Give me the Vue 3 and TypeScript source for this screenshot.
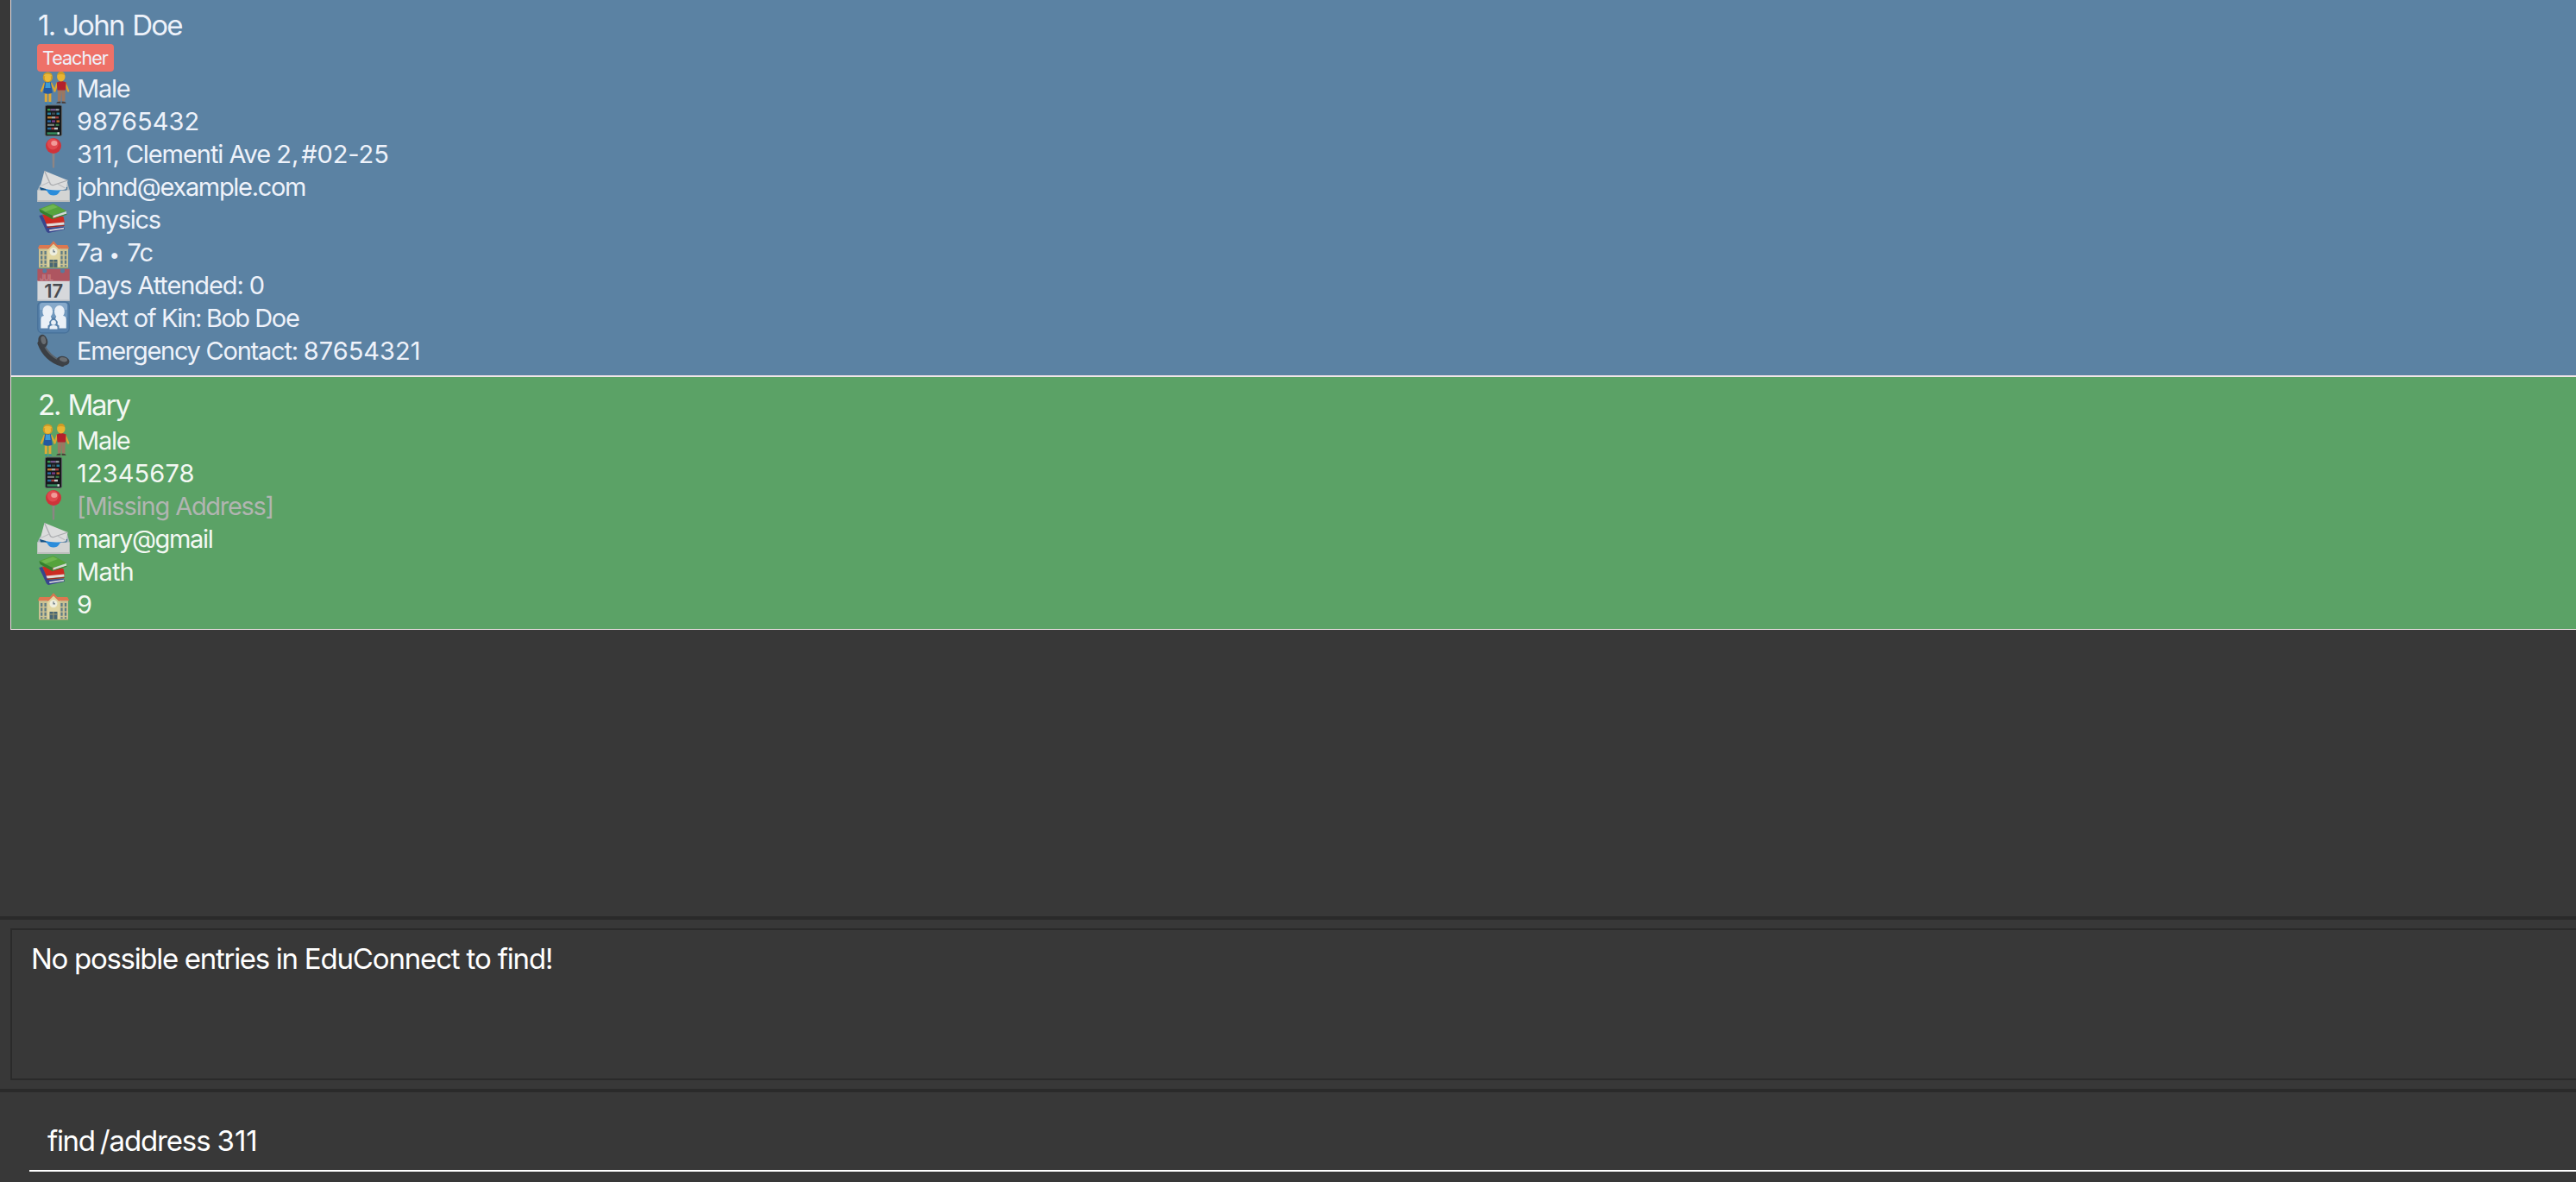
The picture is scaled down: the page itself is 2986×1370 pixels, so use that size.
<script setup lang="ts">
type Icon = 'couple' | 'phone' | 'pin' | 'mail' | 'books' | 'school' | 'calendar' | 'family' | 'call'
interface Part { text: string; spacing: number; small?: boolean }
interface Row { icon: Icon; parts: Part[]; missing?: boolean }
interface Person { title: string; spacing: number; theme: string; tags: string[]; rows: Row[] }

// A run of text with its own tracking, in pixels
const p = (text: string, spacing = -1.3, small = false): Part => ({ text, spacing, small })

const people: Person[] = [
  {
    title: '1. John Doe', spacing: -1.7, theme: 'blue', tags: ['Teacher'],
    rows: [
      { icon: 'couple', parts: [p('Male', -1.27)] },
      { icon: 'phone', parts: [p('98765432', 0.05)] },
      { icon: 'pin', parts: [p('311', 0), p(', ', -0.7), p('Clementi ', -1.05), p('Ave ', -1), p('2', 0), p(', ', -2.6), p('#02-25', -0.1)] },
      { icon: 'mail', parts: [p('johnd@example.com', -1.33)] },
      { icon: 'books', parts: [p('Physics', -1.29)] },
      { icon: 'school', parts: [p('7a ', -0.7), p('•', 1.4, true), p(' 7c', -0.9)] },
      { icon: 'calendar', parts: [p('Days ', -1.25), p('Attended: ', -1.1), p('0')] },
      { icon: 'family', parts: [p('Next '), p('of '), p('Kin: ', -1.75), p('Bob ', -1.5), p('Doe')] },
      { icon: 'call', parts: [p('Emergency '), p('Contact: ', -1.2), p('87654321', 0)] },
    ],
  },
  {
    title: '2. Mary', spacing: -2.1, theme: 'green', tags: [],
    rows: [
      { icon: 'couple', parts: [p('Male', -1.27)] },
      { icon: 'phone', parts: [p('12345678', 0.12)] },
      { icon: 'pin', parts: [p('[Missing ', -1.15), p('Address]')], missing: true },
      { icon: 'mail', parts: [p('mary@gmail', -1.35)] },
      { icon: 'books', parts: [p('Math', -0.8)] },
      { icon: 'school', parts: [p('9', 0)] },
    ],
  },
]

const message: Part[] = [p('No possible entries in '), p('EduConnect to find!', -1.16)]
const command: Part[] = [p('find', -1.3), p(' ', -3.2), p('/address ', -1.15), p('311', 0)]
</script>

<template>
  <main class="window">
    <section class="list">
      <article v-for="person in people" :key="person.title" class="card" :class="person.theme">
        <h2 class="name" :style="{ letterSpacing: person.spacing + 'px' }">{{ person.title }}</h2>
        <div v-if="person.tags.length" class="tags">
          <span v-for="tag in person.tags" :key="tag" class="tag">{{ tag }}</span>
        </div>
        <div v-for="row in person.rows" :key="row.icon" class="row">
          <svg class="icon" viewBox="0 0 38 38" aria-hidden="true">
            <g v-if="row.icon === 'couple'">
              <path d="M8.500 14 5 22.500M16.500 14l4 8" stroke="#d9a633" stroke-width="2.200" stroke-linecap="round" />
              <path d="M10.300 24v11M14.900 24v11" stroke="#dfa936" stroke-width="3" />
              <path d="M9 36.600h3M13.500 36.600h3.500" stroke="#3386b0" stroke-width="1.200" />
              <path d="M9 12.500q3.500-2 7 0l1.800 12q-5.300 2.500-10.600 0z" fill="#2358a0" />
              <path d="M10 12q2.500 2 5 0l.6 7h-6.200z" fill="#3b9bd6" />
              <ellipse cx="12.400" cy="6.600" rx="5.700" ry="6" fill="#cf9a27" />
              <ellipse cx="12.400" cy="7.600" rx="3.600" ry="3.900" fill="#edb939" />
              <path d="M8.500 5q3-2.500 8 0" stroke="#e8b93c" stroke-width="2" fill="none" />
              <path d="M23.500 13.500l-3.200 9M32.500 13.500l3.700 9" stroke="#d9a633" stroke-width="2.300" stroke-linecap="round" />
              <path d="M23.800 20h8.900l-.3 14.500h-3.500l-.7-11-.8 11h-3.500z" fill="#9a7863" />
              <path d="M22.800 12.500q5.400-3 10.800 0l-.6 9h-9.500z" fill="#b3202c" />
              <path d="M22.300 36.800q.3-2.500 5-2v2zM28.600 36.800v-2q4.700-.5 5 2z" fill="#4a3c38" />
              <ellipse cx="27.800" cy="5.900" rx="4.700" ry="5.600" fill="#e9b431" />
              <path d="M23.400 4q.5-4 4.400-4t4.400 4q-4.400-2-8.800 0" fill="#cf9a25" />
            </g>
            <g v-else-if="row.icon === 'phone'">
              <rect x="9.400" y="1" width="19.200" height="35.500" rx="1.800" fill="#17191b" stroke="#62666a" stroke-width="1" />
              <path d="M12 6.200h3.500" stroke="#3a9a50" stroke-width="2.400" />
              <path d="M15.500 6.200h6" stroke="#73578b" stroke-width="2.400" />
              <path d="M21.500 6.200h4" stroke="#89939a" stroke-width="2.400" />
              <path d="M12 10.700h4M22.500 10.700h3.500" stroke="#247b9c" stroke-width="2.400" />
              <path d="M17 10.700h4" stroke="#3d4a50" stroke-width="2.400" />
              <path d="M12 15.200h5" stroke="#b87a35" stroke-width="2.400" />
              <path d="M17 15.200h4" stroke="#9da4a5" stroke-width="2.400" />
              <path d="M21 15.200h4" stroke="#a23c3c" stroke-width="2.400" />
              <path d="M12 19.600h4" stroke="#296aa6" stroke-width="2.400" />
              <path d="M17 19.600h4" stroke="#793a84" stroke-width="2.400" />
              <path d="M22.500 19.600h3.500" stroke="#bf692b" stroke-width="2.400" />
              <path d="M12 23.800h8" stroke="#7b817a" stroke-width="2.200" />
              <path d="M21.500 23.800h4" stroke="#3b7d49" stroke-width="2.200" />
              <path d="M12 28h4.500" stroke="#266c9e" stroke-width="2.400" />
              <path d="M16.500 28h3.500" stroke="#a63e38" stroke-width="2.400" />
              <path d="M20 28h4" stroke="#c5cbcb" stroke-width="2.400" />
              <path d="M11.500 33.600h14" stroke="#34885c" stroke-width="2.600" />
              <path d="M23.500 33.600h2.500" stroke="#d0d8d8" stroke-width="2.600" />
            </g>
            <g v-else-if="row.icon === 'pin'">
              <path d="M17.500 17h3l-.4 18.500h-2.200z" fill="#8d8584" />
              <circle cx="19" cy="10" r="9" fill="#cf333a" />
              <circle cx="18.200" cy="8" r="6.500" fill="#e04a50" />
              <ellipse cx="19.800" cy="7" rx="3.600" ry="3" fill="#f29a98" />
            </g>
            <g v-else-if="row.icon === 'mail'">
              <path d="M3.500 17 .4 23.500V37h37.200V23.500L35 14z" fill="#aeb9c0" />
              <path d="M3 20h32l-1.500 6H5z" fill="#165385" />
              <path d="M10 22h18q-1 8.500-9 8.500T10 22" fill="#2b8ddb" />
              <path d="M8.500 1 35.500 12 33.500 22.500Q19 25.500 3.500 20z" fill="#dcdddd" />
              <path d="M8.500 1 15.500 16.500Q18 18.500 20.500 17L35.500 12" fill="none" stroke="#a9abae" stroke-width="1.300" />
              <path d="M4.500 18.500l10.500-5M32.500 21l-9-5" fill="none" stroke="#bcbec1" stroke-width="1.100" />
              <path d="M.4 23.500h9q2 0 3.500 3t6.100 3 6.100-3 3.500-3h9V37H.4z" fill="#d3d4d3" />
              <path d="M.4 36h37.200" stroke="#b9b9b7" stroke-width="1.600" />
            </g>
            <g v-else-if="row.icon === 'books'">
              <path d="M2.300 15 6 14l8 15 17-1.500.8 3.500L13 35 11 33.500z" fill="#38458d" />
              <path d="M14 31.200 31 28.800v1.800L14.500 33z" fill="#d2d3da" />
              <path d="M6 13.500 30.500 16l1.500 7.500-20.500 3z" fill="#cc2b22" />
              <path d="M10.500 24.500 31.300 22.500v3L11.800 27.500z" fill="#e3dad7" />
              <path d="M11.500 28.400 31.600 26.300" stroke="#a32420" stroke-width="1.300" />
              <path d="M2.300 7.200 18.700 1 34.300 9.500 18 15z" fill="#55a33c" />
              <path d="M5 7.200 18.500 2.200 24 5 9.500 10.500z" fill="#6fb650" />
              <path d="M2.300 7.200 18 15v4.200L3.600 11z" fill="#35802d" />
              <path d="M18.500 15.300 34 10v2.800L18.500 17.900z" fill="#d3dad1" />
              <path d="M18 18.500 34.300 13.200" stroke="#3a842f" stroke-width="1.200" />
            </g>
            <g v-else-if="row.icon === 'school'">
              <path d="M2 14h34v24H2z" fill="#c9c193" />
              <path d="M.7 15.200 2.800 11h32.400l2.100 4.200z" fill="#dc7850" />
              <path d="M5.200 18v18M9.600 18v18M28.500 18v18M33 18v18" stroke="#5d7a84" stroke-width="2.200" stroke-dasharray="4 1.400" />
              <path d="M12 14.500 19 8l7.500 6.500V38H12z" fill="#e0d6a2" />
              <path d="M11.500 14.800 19 6.300 26.800 14.800 25.500 16 19 9.800l-6.300 6.200z" fill="#d8754f" />
              <circle cx="19" cy="18.700" r="4.500" fill="#eeeede" />
              <path d="M19 16.300v2.600h2" stroke="#6d7a86" stroke-width="1.200" fill="none" />
              <path d="M14.500 28h9V38h-9z" fill="#486673" />
              <path d="M19 28v10M14.500 31h9" stroke="#a19d74" stroke-width="1" />
              <path d="M2 37.300h34" stroke="#8ea66b" stroke-width="1.200" />
            </g>
            <g v-else-if="row.icon === 'calendar'">
              <path d="M.4 14h37.300v23.700H.4z" fill="#d6d8db" />
              <path d="M.4.700h37.300V14.800H.4z" fill="#ae5560" />
              <circle cx="8.800" cy="3" r="2.500" fill="#587a9d" />
              <circle cx="29.500" cy="3" r="2.500" fill="#587a9d" />
              <text x="3" y="13.500" font-size="9" letter-spacing="-.5" fill="#c58088" class="glyph">JUL</text>
              <text x="19.200" y="34" font-size="22" text-anchor="middle" fill="#484b50" class="glyph">17</text>
              <path d="M.4 37h37.300" stroke="#b9bcc0" stroke-width="1" />
            </g>
            <g v-else-if="row.icon === 'family'">
              <rect x=".8" y=".8" width="36.400" height="36" rx="5" fill="#5681ab" stroke="#47719a" stroke-width="1.300" />
              <path d="M3 5q0-3 3-3h26q3 0 3 3v5H3z" fill="#86a9ca" />
              <path d="M3 10h32v9H3z" fill="#6f97bd" />
              <g fill="#eaf0f7">
                <ellipse cx="12.200" cy="12" rx="5.900" ry="7" />
                <ellipse cx="25.900" cy="12" rx="5.900" ry="7" />
                <path d="M4.300 31.500V21q0-3.500 3.500-4h7.700l1.500 3.500-2.800 3.500.3 3-2 1.500v3zM33.800 31.500V21q0-3.500-3.500-4h-7.700l-1.500 3.500 2.800 3.500-.3 3 2 1.500v3z" />
                <circle cx="19" cy="24.800" r="2.900" />
                <path d="M14.500 32.500v-2q0-2.500 4.500-2.500t4.500 2.500v2z" />
              </g>
            </g>
            <g v-else>
              <path d="M3.500 11C8 23 16 31 29 35" fill="none" stroke="#3b3f44" stroke-width="6" stroke-linecap="round" />
              <path d="M8.500 14C12.500 21 18 26.500 25 30" fill="none" stroke="#5d6369" stroke-width="1.800" />
              <ellipse cx="6.800" cy="8.300" rx="5.300" ry="7.600" transform="rotate(-14 6.800 8.300)" fill="#3d4146" />
              <ellipse cx="7.300" cy="7.300" rx="2.800" ry="4.800" transform="rotate(-14 7.300 7.300)" fill="#686d72" />
              <ellipse cx="30" cy="31.200" rx="7.500" ry="5.300" transform="rotate(12 30 31.200)" fill="#3d4146" />
              <ellipse cx="30.500" cy="29.800" rx="4.600" ry="2.500" transform="rotate(12 30.500 29.800)" fill="#686d72" />
            </g>
          </svg>
          <span class="value" :class="{ missing: row.missing }"><span
            v-for="(part, i) in row.parts" :key="i" :class="{ small: part.small }"
            :style="{ letterSpacing: part.spacing + 'px' }">{{ part.text }}</span></span>
        </div>
      </article>
    </section>
    <section class="result">
      <div class="message"><span
        v-for="(part, i) in message" :key="i" :style="{ letterSpacing: part.spacing + 'px' }">{{ part.text }}</span></div>
    </section>
    <section class="command">
      <div class="field"><span
        v-for="(part, i) in command" :key="i" :style="{ letterSpacing: part.spacing + 'px' }">{{ part.text }}</span></div>
    </section>
  </main>
</template>

<style>
html,
body {
  background: #383838;
  overflow: hidden;
}
</style>

<style scoped>
.window {
  display: flex;
  flex-direction: column;
  width: 100%;
  height: 1370px;
  background: #383838;
  font-family: Inter, "Liberation Sans", sans-serif;
  color: #fff;
}
.list {
  height: 1062px;
  flex: none;
  padding-left: 12px;
  overflow: hidden;
}
.card {
  box-sizing: border-box;
  border: 1px solid #f0e6e8;
  border-right: 0;
  padding: 11px 0 10px 30px;
  color: #eef2fa;
}
.card:first-child {
  border-top: 0;
  padding-top: 8px;
}
.blue {
  background: #5b82a3;
}
.green {
  background: #5ba266;
  color: #f3f8f3;
}
.name {
  margin: 0 0 1px 1px;
  font-size: 33px;
  line-height: 42px;
  font-weight: 400;
  word-spacing: 1.8px;
}
.tags {
  display: flex;
  height: 32px;
}
.tag {
  box-sizing: border-box;
  width: 89px;
  height: 32px;
  padding-left: 6px;
  border-radius: 4px;
  background: #ee7168;
  font-size: 21.5px;
  line-height: 32px;
  letter-spacing: -0.97px;
}
.row {
  display: flex;
  height: 38px;
}
.icon {
  width: 38px;
  height: 38px;
  flex: none;
}
.glyph {
  font-family: Inter, sans-serif;
  font-weight: 600;
}
.value {
  margin-left: 8px;
  font-size: 29px;
  line-height: 40px;
  white-space: pre;
}
.small {
  font-size: 22px;
  line-height: 1;
}
.missing {
  color: #b1b5b1;
}
.result {
  box-sizing: border-box;
  flex: none;
  height: 204px;
  border-top: 4px solid #2a2a2a;
  border-bottom: 4px solid #2a2a2a;
  padding: 10px 0 10px 12px;
}
.message {
  box-sizing: border-box;
  height: 176px;
  border: 2px solid #2a2a2a;
  border-right: 0;
  padding: 11px 0 0 22px;
  font-size: 33px;
  line-height: 44px;
  white-space: pre;
}
.command {
  padding: 34px 0 0 34px;
}
.field {
  box-sizing: border-box;
  height: 58px;
  border-bottom: 2px solid #fff;
  padding-left: 21px;
  font-size: 33px;
  line-height: 44px;
  white-space: pre;
}
</style>
